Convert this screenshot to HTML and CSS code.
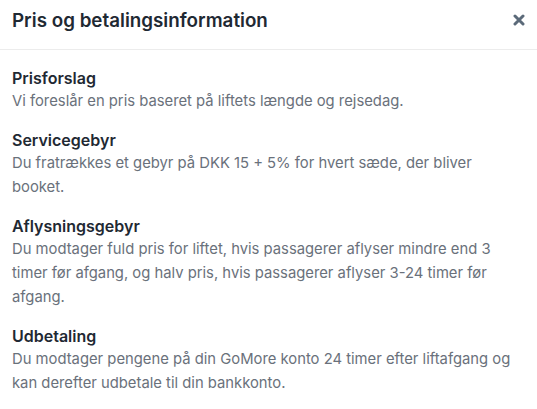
FILE: index.html
```html
<!DOCTYPE html>
<html lang="da">
<head>
<meta charset="utf-8">
<link rel="stylesheet" href="styles.css">
</head>
<body>
<div class="modal">
  <header class="modal-header">
    <h1 class="modal-title">Pris og betalingsinformation</h1>
    <button class="close" aria-label="Luk">
      <svg width="12" height="12" viewBox="0 0 12 12"><path d="M2 2 L10 10 M10 2 L2 10" stroke="#5b6a79" stroke-width="3" stroke-linecap="round"/></svg>
    </button>
  </header>
  <div class="modal-body">
    <section class="item">
      <h2 class="item-title">Prisforslag</h2>
      <p class="item-text">Vi foreslår en pris baseret på liftets længde og rejsedag.</p>
    </section>
    <section class="item">
      <h2 class="item-title">Servicegebyr</h2>
      <p class="item-text">Du fratrækkes et gebyr på DKK 15 + 5% for hvert sæde, der bliver booket.</p>
    </section>
    <section class="item">
      <h2 class="item-title">Aflysningsgebyr</h2>
      <p class="item-text">Du modtager fuld pris for liftet, hvis passagerer aflyser mindre end 3 timer før afgang, og halv pris, hvis passagerer aflyser 3-24 timer før afgang.</p>
    </section>
    <section class="item">
      <h2 class="item-title">Udbetaling</h2>
      <p class="item-text">Du modtager pengene på din GoMore konto 24 timer efter liftafgang og kan derefter udbetale til din bankkonto.</p>
    </section>
  </div>
</div>
</body>
</html>
```
FILE: styles.css
```css
* { box-sizing: border-box; }
html, body { margin: 0; padding: 0; background: #fff; }
body { font-family: Inter, "Liberation Sans", sans-serif; }
.modal { width: 537px; }
.modal-header {
  display: flex;
  align-items: center;
  justify-content: space-between;
  height: 50px;
  padding: 0 12px 0 12px;
  border-bottom: 1px solid #ececec;
}
.modal-title {
  margin: 0;
  font-size: 18.8px;
  font-weight: 600;
  color: #1f2933;
  padding-bottom: 9px;
}
.close {
  border: 0;
  background: none;
  padding: 0;
  width: 12px;
  height: 12px;
  margin-bottom: 9px;
  display: flex;
}
.modal-body { padding: 17px 12px 0 12px; }
.item { margin-bottom: 16px; }
.item-title {
  margin: 0;
  font-size: 16px;
  line-height: 22px;
  font-weight: 600;
  color: #1f2933;
}
.item-text {
  margin: 0;
  font-size: 14.8px;
  line-height: 24px;
  color: #6a717b;
}
```
